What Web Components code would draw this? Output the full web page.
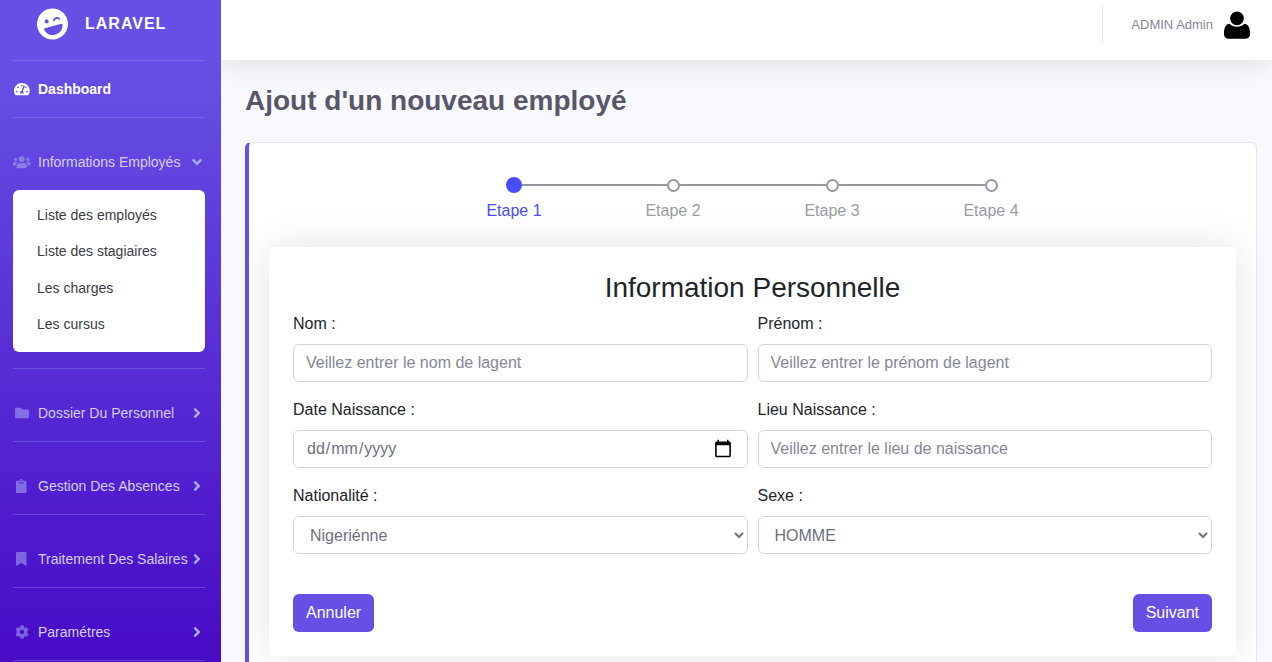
<!DOCTYPE html>
<html lang="fr">
<head>
<meta charset="utf-8">
<meta name="viewport" content="width=device-width, initial-scale=1">
<title>Ajout d'un nouveau employé</title>
<style>
  body { margin: 0; background: #f8f9fc; color: #212529; font: 16px/24px "Liberation Sans", Arial, sans-serif; }
</style>
</head>
<body>
<admin-layout>
  <side-bar slot="sidebar">
    <side-brand>LARAVEL</side-brand>
    <side-link icon="dashboard" active>Dashboard</side-link>
    <side-link icon="users" arrow="down">Informations Employés</side-link>
    <side-menu>
      <menu-link>Liste des employés</menu-link>
      <menu-link>Liste des stagiaires</menu-link>
      <menu-link>Les charges</menu-link>
      <menu-link>Les cursus</menu-link>
    </side-menu>
    <side-link icon="folder" arrow="right">Dossier Du Personnel</side-link>
    <side-link icon="clipboard" arrow="right">Gestion Des Absences</side-link>
    <side-link icon="bookmark" arrow="right">Traitement Des Salaires</side-link>
    <side-link icon="cog" arrow="right">Paramétres</side-link>
  </side-bar>
  <top-bar slot="topbar">ADMIN Admin</top-bar>
  <page-title>Ajout d'un nouveau employé</page-title>
  <accent-card>
    <step-list>
      <step-item active>Etape 1</step-item>
      <step-item>Etape 2</step-item>
      <step-item>Etape 3</step-item>
      <step-item>Etape 4</step-item>
    </step-list>
    <form-panel>
      <span slot="title">Information Personnelle</span>
      <form-field label="Nom :" placeholder="Veillez entrer le nom de lagent"></form-field>
      <form-field label="Prénom :" placeholder="Veillez entrer le prénom de lagent"></form-field>
      <form-field label="Date Naissance :" type="date"></form-field>
      <form-field label="Lieu Naissance :" placeholder="Veillez entrer le lieu de naissance"></form-field>
      <form-field label="Nationalité :" type="select" options="Nigeriénne"></form-field>
      <form-field label="Sexe :" type="select" options="HOMME,FEMME"></form-field>
      <action-button slot="actions">Annuler</action-button>
      <action-button slot="actions">Suivant</action-button>
    </form-panel>
  </accent-card>
</admin-layout>

<script>
const ICONS = {
  dashboard: ['0 0 576 512', 'M288 32C128.94 32 0 160.94 0 320c0 52.8 14.25 102.26 39.06 144.8 5.61 9.62 16.3 15.2 27.44 15.2h443c11.14 0 21.83-5.58 27.44-15.2C561.75 422.26 576 372.8 576 320c0-159.06-128.94-288-288-288zm0 64c14.71 0 26.58 10.13 30.32 23.65-1.11 2.26-2.64 4.23-3.45 6.67l-9.22 27.67c-5.13 3.49-10.97 6.01-17.64 6.01-17.67 0-32-14.33-32-32S270.33 96 288 96zM96 384c-17.67 0-32-14.33-32-32s14.33-32 32-32 32 14.33 32 32-14.33 32-32 32zm48-160c-17.67 0-32-14.33-32-32s14.33-32 32-32 32 14.33 32 32-14.33 32-32 32zm246.77-72.41l-61.33 184C343.13 347.33 352 364.54 352 384c0 11.72-3.38 22.55-8.88 32H232.88c-5.5-9.45-8.88-20.28-8.88-32 0-33.94 26.5-61.43 59.9-63.59l61.34-184.01c4.17-12.56 17.73-19.45 30.36-15.17 12.57 4.19 19.35 17.79 15.17 30.36zm14.66 57.2l15.52-46.55c3.47-1.29 7.13-2.23 11.05-2.23 17.67 0 32 14.33 32 32s-14.33 32-32 32c-11.38-.01-20.89-6.28-26.57-15.22zM480 384c-17.67 0-32-14.33-32-32s14.33-32 32-32 32 14.33 32 32-14.33 32-32 32z'],
  users: ['0 0 640 512', 'M96 224c35.3 0 64-28.7 64-64s-28.7-64-64-64-64 28.7-64 64 28.7 64 64 64zm448 0c35.3 0 64-28.7 64-64s-28.7-64-64-64-64 28.7-64 64 28.7 64 64 64zm32 32h-64c-17.6 0-33.5 7.1-45.1 18.6 40.3 22.1 68.9 62 75.1 109.4h66c17.7 0 32-14.3 32-32v-32c0-35.3-28.7-64-64-64zm-256 0c61.9 0 112-50.1 112-112S381.9 32 320 32 208 82.1 208 144s50.1 112 112 112zm76.8 32h-8.3c-20.8 10-43.9 16-68.5 16s-47.6-6-68.5-16h-8.3C179.6 288 128 339.6 128 403.2V432c0 26.5 21.5 48 48 48h288c26.5 0 48-21.5 48-48v-28.8c0-63.6-51.6-115.2-115.2-115.2zm-223.7-13.4C161.5 263.1 145.6 256 128 256H64c-35.3 0-64 28.7-64 64v32c0 17.7 14.3 32 32 32h65.9c6.3-47.4 34.9-87.3 75.2-109.4z'],
  folder: ['0 0 512 512', 'M464 128H272l-64-64H48C21.49 64 0 85.49 0 112v288c0 26.51 21.49 48 48 48h416c26.51 0 48-21.49 48-48V176c0-26.51-21.49-48-48-48z'],
  clipboard: ['0 0 384 512', 'M384 112v352c0 26.51-21.49 48-48 48H48c-26.51 0-48-21.49-48-48V112c0-26.51 21.49-48 48-48h80c0-35.29 28.71-64 64-64s64 28.71 64 64h80c26.51 0 48 21.49 48 48zM192 40c-13.255 0-24 10.745-24 24s10.745 24 24 24 24-10.745 24-24-10.745-24-24-24m96 114v-20a6 6 0 0 0-6-6H102a6 6 0 0 0-6 6v20a6 6 0 0 0 6 6h180a6 6 0 0 0 6-6z'],
  bookmark: ['0 0 384 512', 'M0 512V48C0 21.49 21.49 0 48 0h288c26.51 0 48 21.49 48 48v464L192 400 0 512z'],
  cog: ['0 0 512 512', 'M487.4 315.7l-42.6-24.6c4.3-23.2 4.3-47 0-70.2l42.6-24.6c4.9-2.8 7.1-8.6 5.5-14-11.1-35.6-30-67.8-54.7-94.6-3.8-4.1-10-5.1-14.8-2.3L380.8 110c-17.9-15.4-38.5-27.3-60.8-35.1V25.8c0-5.6-3.9-10.5-9.4-11.7-36.7-8.2-74.3-7.8-109.2 0-5.5 1.2-9.4 6.1-9.4 11.7V75c-22.2 7.9-42.8 19.8-60.8 35.1L88.7 85.5c-4.9-2.8-11-1.9-14.8 2.3-24.7 26.7-43.6 58.9-54.7 94.6-1.7 5.4.6 11.2 5.5 14L67.3 221c-4.3 23.2-4.3 47 0 70.2l-42.6 24.6c-4.9 2.8-7.1 8.6-5.5 14 11.1 35.6 30 67.8 54.7 94.6 3.8 4.1 10 5.1 14.8 2.3l42.6-24.6c17.9 15.4 38.5 27.3 60.8 35.1v49.2c0 5.6 3.9 10.5 9.4 11.7 36.7 8.2 74.3 7.8 109.2 0 5.5-1.2 9.4-6.1 9.4-11.7v-49.2c22.2-7.9 42.8-19.8 60.8-35.1l42.6 24.6c4.9 2.8 11 1.9 14.8-2.3 24.7-26.7 43.6-58.9 54.7-94.6 1.5-5.5-.7-11.3-5.6-14.1zM256 336c-44.1 0-80-35.9-80-80s35.9-80 80-80 80 35.9 80 80-35.9 80-80 80z'],
  right: ['0 0 256 512', 'M224.3 273l-136 136c-9.4 9.4-24.6 9.4-33.9 0l-22.6-22.6c-9.4-9.4-9.4-24.6 0-33.9l96.4-96.4-96.4-96.4c-9.4-9.4-9.4-24.6 0-33.9L54.3 103c9.4-9.4 24.6-9.4 33.9 0l136 136c9.5 9.4 9.5 24.6.1 34z'],
  down: ['0 0 320 512', 'M143 352.3L7 216.3c-9.4-9.4-9.4-24.6 0-33.9l22.6-22.6c9.4-9.4 24.6-9.4 33.9 0l96.4 96.4 96.4-96.4c9.4-9.4 24.6-9.4 33.9 0l22.6 22.6c9.4 9.4 9.4 24.6 0 33.9l-136 136c-9.2 9.4-24.4 9.4-33.8 0z'],
  wink: ['0 0 496 512', 'M248 8C111 8 0 119 0 256s111 248 248 248 248-111 248-248S385 8 248 8zm20.1 198.1c4-25.2 34.2-42.1 59.9-42.1s55.9 16.9 59.9 42.1c1.7 11.1-11.4 18.3-19.8 10.8l-9.5-8.5c-14.8-13.2-46.2-13.2-61 0L288 217c-8.4 7.4-21.6.3-19.9-10.9zM168 160c17.7 0 32 14.3 32 32s-14.3 32-32 32-32-14.3-32-32 14.3-32 32-32zm230.9 146C390 377 329 432 254.900 432h-13.700C167 432 106 377 97.100 306c-1.100-8.500 5.500-16 14.100-16h273.600c8.600 0 15.200 7.500 14.100 16z'],
  person: ['0 0 32 32', 'M16 2.500a6.800 6.800 0 0 1 6.800 6.800c0 4-3 7-6.800 7s-6.800-3-6.800-7A6.800 6.800 0 0 1 16 2.500zM8.500 14.800c3.700 3.800 11.300 3.800 15 0C27 15 29 19 29 24v1.800c0 2.200-2 4-4.500 4h-17c-2.500 0-4.500-1.800-4.500-4V24c0-5 2-9 5.500-9.200z']
};

/* Registers an element whose open shadow root is filled from its styles and markup. */
function define(name, css, markup, ready) {
  const template = document.createElement('template');
  const create = host => '<style>*, *::before, *::after { box-sizing: border-box; }' + css + '</style>' +
    (typeof markup === 'function' ? markup(host) : markup);
  if (typeof markup !== 'function') template.innerHTML = create();
  customElements.define(name, class extends HTMLElement {
    connectedCallback() {
      if (this.shadowRoot) return;
      const root = this.attachShadow({ mode: 'open' });
      if (typeof markup === 'function') root.innerHTML = create(this);
      else root.append(template.content.cloneNode(true));
      if (ready) ready(root);
    }
  });
}

define('app-icon',
  ':host { display: flex; align-items: center; justify-content: center; } svg { display: block; height: 100%; width: auto; fill: currentColor; overflow: visible; }',
  el => { const [box, d] = ICONS[el.getAttribute('name')]; return `<svg viewBox="${box}" aria-hidden="true"><path d="${d}"/></svg>`; });

define('admin-layout',
  `:host { display: grid; grid-template-columns: 221px minmax(0, 1fr); min-height: 100vh; }
   .content { overflow: hidden; }
   main { padding: 24px 15px 24px 24px; }`,
  '<slot name="sidebar"></slot><div class="content"><slot name="topbar"></slot><main><slot></slot></main></div>');

define('side-bar',
  `:host { display: block; background: linear-gradient(180deg, #664fe4 10%, #4606c4 100%); color: #fff; }
   nav { padding: 0 16px 0 13px; }`,
  '<nav aria-label="Menu principal"><slot></slot></nav>');

define('side-brand',
  `:host { display: block; border-bottom: 1px solid rgba(168,176,240,.3); padding-bottom: 12px; }
   a { display: flex; align-items: center; gap: 16px; height: 48px; padding-left: 23px; color: #fff; font-weight: 700; letter-spacing: 1px; text-decoration: none; }
   app-icon { height: 32px; width: 33px; transform: rotate(-15deg); }`,
  '<a href="#"><app-icon name="wink"></app-icon><span><slot></slot></span></a>');

define('side-link',
  `:host { display: block; margin-bottom: 16px; border-bottom: 1px solid rgba(168,176,240,.3); }
   :host([arrow="down"]) { margin-bottom: 0; border-bottom: 0; }
   a { display: flex; align-items: center; height: 56px; color: #d3d0f6; font-size: 14px; text-decoration: none; white-space: nowrap; }
   :host([active]) a { color: #fff; font-weight: 700; }
   .icon { width: 17px; height: 14px; margin-right: 8px; color: rgba(178,184,246,.5); }
   :host([active]) .icon { color: #fff; }
   .label { flex: 1; }
   .arrow { width: 16px; height: 16px; color: #a9a8ec; }`,
  el => {
    const arrow = el.getAttribute('arrow');
    return `<a href="#"><app-icon class="icon" name="${el.getAttribute('icon')}"></app-icon><span class="label"><slot></slot></span>${arrow ? `<app-icon class="arrow" name="${arrow}"></app-icon>` : ''}</a>`;
  });

define('side-menu',
  `:host { display: block; padding-bottom: 16px; margin-bottom: 16px; border-bottom: 1px solid rgba(168,176,240,.3); }
   div { display: flex; flex-direction: column; min-height: 162px; padding: 7px 8px 10px; background: #fff; border-radius: 6px; }`,
  '<div><slot></slot></div>');

define('menu-link',
  `:host { display: flex; flex: 1; }
   a { display: flex; flex: 1; align-items: center; padding: 0 16px; color: #3a3b45; font-size: 14px; text-decoration: none; white-space: nowrap; }`,
  '<a href="#"><slot></slot></a>');

define('top-bar',
  `:host { display: block; position: relative; background: #fff; box-shadow: 0 2px 28px rgba(58,59,69,.15); }
   header { display: flex; justify-content: flex-end; padding: 6px 19px 16px; }
   a { display: flex; align-items: center; gap: 8px; height: 38px; padding-left: 28px; border-left: 1px solid #e3e6f0; color: #858796; font-size: 13px; text-decoration: none; }
   app-icon { width: 32px; height: 32px; color: #000; }`,
  '<header><a href="#"><span><slot></slot></span><app-icon name="person"></app-icon></a></header>');

define('page-title',
  `:host { display: block; margin-bottom: 24px; }
   h1 { margin: 0; color: #5a5669; font-size: 28px; line-height: 34px; font-weight: 700; }`,
  '<h1><slot></slot></h1>');

define('accent-card',
  `:host { display: block; padding: 34px 20px 20px; background: #fff; border: 1px solid #e3e6f0; border-left: 4px solid #664fe4; border-radius: 6px; }`,
  '<slot></slot>');

define('step-list',
  `:host { display: block; }
   div { display: grid; grid-template-columns: repeat(4, 1fr); max-width: 636px; margin: 0 auto 24px; }`,
  '<div role="list"><slot></slot></div>');

define('step-item',
  `:host { display: block; color: #999ca1; text-align: center; }
   .track { display: flex; align-items: center; height: 16px; margin-bottom: 6px; }
   .track::before, .track::after { content: ""; flex: 1; height: 2px; background: #93989e; }
   :host(:first-child) .track::before, :host(:last-child) .track::after { background: none; }
   .dot { width: 13px; height: 13px; border: 2px solid #93989e; border-radius: 50%; }
   :host([active]) { color: #484cff; }
   :host([active]) .dot { width: 16px; height: 16px; border: 0; background: #484cff; }`,
  '<div role="listitem"><div class="track"><span class="dot"></span></div><slot></slot></div>');

define('form-panel',
  `:host { display: block; padding: 24px; background: #fff; border-radius: 6px; box-shadow: 0 0 40px rgba(0,0,0,.11); }
   h2 { margin: 0 0 8px; font-size: 28px; line-height: 33px; font-weight: 400; text-align: center; }
   .fields { display: grid; grid-template-columns: repeat(2, minmax(0, 1fr)); gap: 16px 10px; }
   .actions { display: flex; justify-content: space-between; margin-top: 40px; }`,
  '<form><h2><slot name="title"></slot></h2><div class="fields"><slot></slot></div><div class="actions"><slot name="actions"></slot></div></form>');

define('form-field',
  `:host { display: block; }
   label { display: block; margin-bottom: 8px; }
   .control { display: grid; align-items: center; }
   .control > * { grid-area: 1 / 1; }
   input, select { display: block; width: 100%; height: 38px; margin: 0; padding: 6px 12px; border: 1px solid #d1d3e2; border-radius: 6px; background: #fff; color: #6e707e; font: inherit; }
   input::placeholder { color: #858796; opacity: 1; }
   input::-webkit-calendar-picker-indicator { width: 20px; height: 20px; }
   .empty:not(:focus)::-webkit-datetime-edit { color: transparent; }
   .hint { display: none; padding-left: 13px; color: #6e707e; pointer-events: none; }
   .hint span { padding: 0 1px; }
   .empty:not(:focus) + .hint { display: block; }`,
  el => {
    const label = el.getAttribute('label'), type = el.getAttribute('type') || 'text';
    let control = `<input id="control" type="${type}" placeholder="${el.getAttribute('placeholder') || ''}">`;
    if (type === 'select') control = `<select id="control">${el.getAttribute('options').split(',').map(o => `<option>${o}</option>`).join('')}</select>`;
    if (type === 'date') control = '<input id="control" class="empty" type="date"><span class="hint" aria-hidden="true"><span>dd</span>/<span>mm</span>/<span>yyyy</span></span>';
    return `<label for="control">${label}</label><div class="control">${control}</div>`;
  },
  root => {
    /* The day-first hint stands in for the browser's own until a date is chosen. */
    const date = root.querySelector('[type="date"]');
    if (date) date.addEventListener('input', () => date.classList.toggle('empty', !date.value));
  });

define('action-button',
  `:host { display: block; }
   button { height: 38px; padding: 0 13px; border: 0; border-radius: 6px; background: #664fe4; color: #fff; font: inherit; cursor: pointer; }`,
  '<button type="button"><slot></slot></button>');
</script>
</body>
</html>
